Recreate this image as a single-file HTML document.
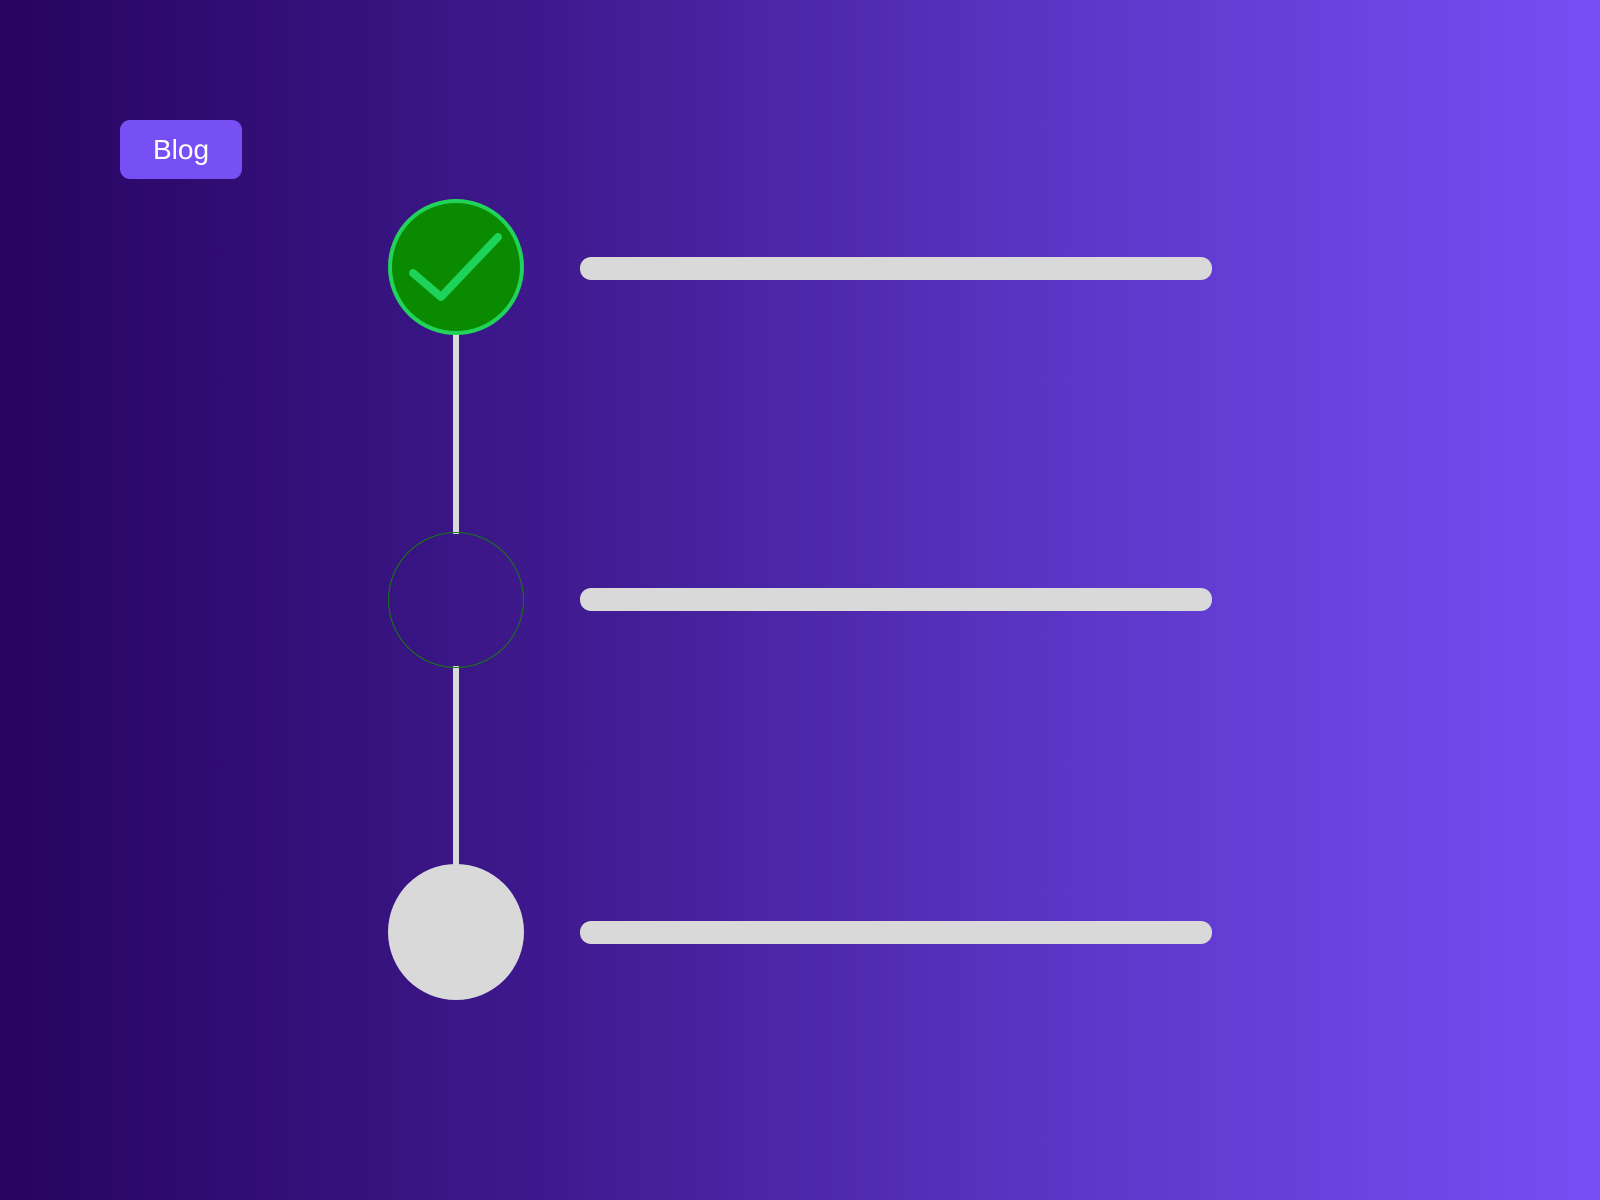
<!DOCTYPE html>
<html><head><style>
html,body{margin:0;padding:0}
body{width:1600px;height:1200px;position:relative;overflow:hidden;background:linear-gradient(90deg,#26045f 0%,#3f1a8f 35%,#5a35c4 65%,#774ef5 100%);font-family:"Liberation Sans",sans-serif}
.blog{position:absolute;left:120px;top:120px;width:122px;height:59px;background:#7650f5;border-radius:10px;color:#fff;font-size:28px;line-height:59px;text-align:center}
.line{position:absolute;left:453px;width:6px;background:#d9d9d9}
.bar{position:absolute;left:580px;width:632px;height:23px;background:#d9d9d9;border-radius:11px}
.c{position:absolute;left:388px;width:136px;height:136px;border-radius:50%;box-sizing:border-box}
</style></head><body>
<div class="blog">Blog</div>
<div class="line" style="top:334px;height:200px"></div>
<div class="line" style="top:666px;height:200px"></div>
<div class="c" style="top:199px;background:#0a8a00;border:4px solid #22d35a"></div>
<svg style="position:absolute;left:0;top:0" width="1600" height="1200"><polyline points="413,273 441,297 498,237" fill="none" stroke="#1ed35a" stroke-width="8" stroke-linecap="round" stroke-linejoin="round"/></svg>
<div class="c" style="top:532px;border:1px solid #167a10"></div>
<div class="c" style="top:864px;background:#d9d9d9"></div>
<div class="bar" style="top:257px"></div>
<div class="bar" style="top:588px"></div>
<div class="bar" style="top:921px"></div>
</body></html>
